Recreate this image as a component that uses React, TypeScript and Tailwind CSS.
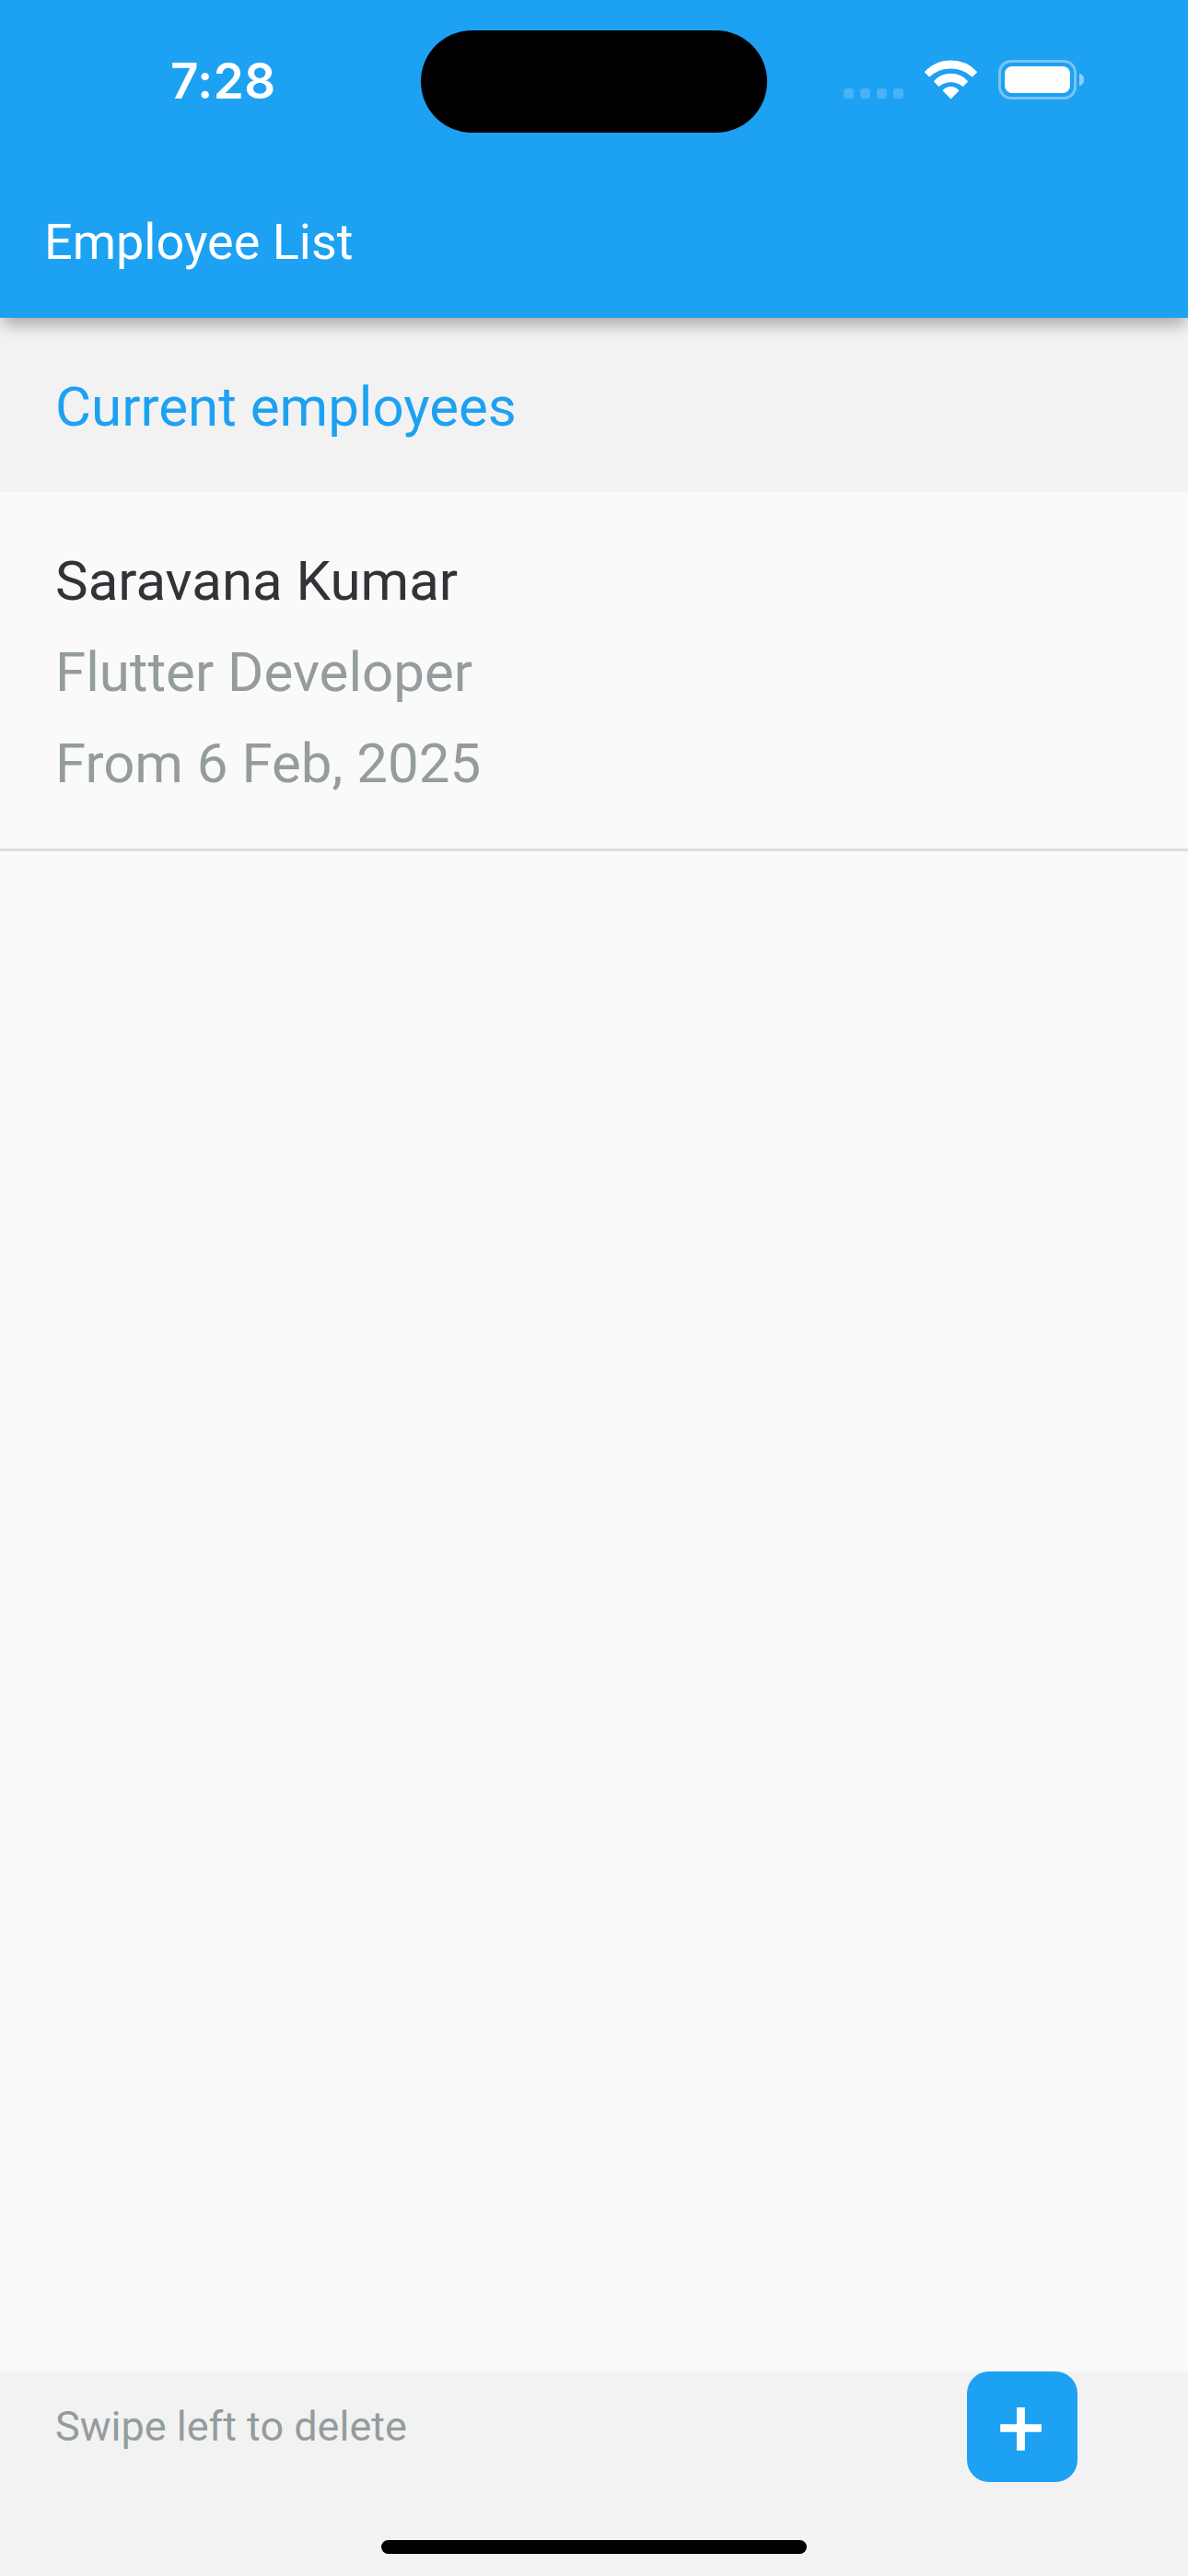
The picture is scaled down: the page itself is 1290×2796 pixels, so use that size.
const employees = [
  { name: 'Saravana Kumar', role: 'Flutter Developer', period: 'From 6 Feb, 2025' },
];

function WifiIcon() {
  return (
    <svg className="h-[43px] w-[58px]" viewBox="0 0 174 129" fill="white" stroke="white" strokeWidth="4" strokeLinejoin="round">
      <path d="M5 39.500A115.500 115.500 0 0 1 172 39.500L158 53A104 104 0 0 0 19 53Z" />
      <path d="M35 70A72.500 72.500 0 0 1 142 70L127.500 84.500A61 61 0 0 0 49.500 84.500Z" />
      <path d="M64 100A32.500 32.500 0 0 1 113 100L88.500 124.500Z" />
    </svg>
  );
}

function BatteryIcon() {
  return (
    <svg className="h-[43px] w-[93px]" viewBox="0 0 93 43">
      <rect x="1.500" y="1.500" width="82" height="40" rx="12.500" fill="none" stroke="white" strokeOpacity="0.4" strokeWidth="3" />
      <rect x="7" y="7" width="71" height="29" rx="8" fill="white" />
      <path d="M88 14.500C95 17 95 26 88 28.500Z" fill="white" fillOpacity="0.5" />
    </svg>
  );
}

function StatusBar() {
  return (
    <div className="flex h-[177px] items-start">
      <div className="w-[457px] pl-[185px] pt-[56px] font-['Inter'] text-[53px] leading-[64px] font-semibold tracking-[0.500px]">
        7:28
      </div>
      <div className="mt-[33.4px] h-[110.800px] w-[376.400px] shrink-0 rounded-full bg-black" />
      <div className="ml-[82.600px] flex pt-[65px]">
        <div className="flex gap-[7px] pt-[31px]">
          {[0, 1, 2, 3].map((dot) => (
            <span key={dot} className="size-[11px] rounded-[3.500px] bg-white/20" />
          ))}
        </div>
        <div className="ml-[22px]">
          <WifiIcon />
        </div>
        <div className="ml-[23px]">
          <BatteryIcon />
        </div>
      </div>
    </div>
  );
}

export default function App() {
  return (
    <div className="flex h-[2796px] w-[1290px] flex-col overflow-hidden bg-[#fafafa] font-['Roboto',sans-serif]">
      <header className="relative z-10 h-[345px] shrink-0 bg-[#1da1f2] text-white shadow-[0_12px_15px_-3px_rgba(0,0,0,0.24),0_3px_18px_-2px_rgba(0,0,0,0.08)]">
        <StatusBar />
        <h1 className="pt-[54px] pl-12 text-[54px] leading-[64px]">Employee List</h1>
      </header>

      <main className="flex-1">
        <h2 className="h-[189px] bg-[#f2f2f2] pt-[62px] pl-[60px] text-[60px] leading-[70px] text-[#1da1f2]">
          Current employees
        </h2>
        <ul>
          {employees.map((employee) => (
            <li
              key={employee.name}
              className="flex h-[390px] flex-col gap-[29px] border-b-[3px] border-[#dedede] pt-[62px] pl-[60px] text-[60px] leading-[70px] text-[#949c9e]"
            >
              <p className="text-[#323238]">{employee.name}</p>
              <p>{employee.role}</p>
              <p>{employee.period}</p>
            </li>
          ))}
        </ul>
      </main>

      <footer className="flex h-[222px] shrink-0 flex-col bg-[#f2f2f2]">
        <div className="flex h-[120px] items-center justify-between pr-[120px] pl-[60px]">
          <p className="text-[45px] leading-[54px] text-[#949c9e]">Swipe left to delete</p>
          <button aria-label="Add employee" className="size-[120px] rounded-3xl bg-[#1da1f2]">
            <svg className="size-[120px]" viewBox="0 0 120 120" fill="white">
              <path d="M54 39h8.900v18.200h18v8.500h-18v20.100H54V65.700H36.200v-8.500H54Z" />
            </svg>
          </button>
        </div>
        <div className="mx-auto mt-[63px] h-[15px] w-[462px] rounded-full bg-black" />
      </footer>
    </div>
  );
}
